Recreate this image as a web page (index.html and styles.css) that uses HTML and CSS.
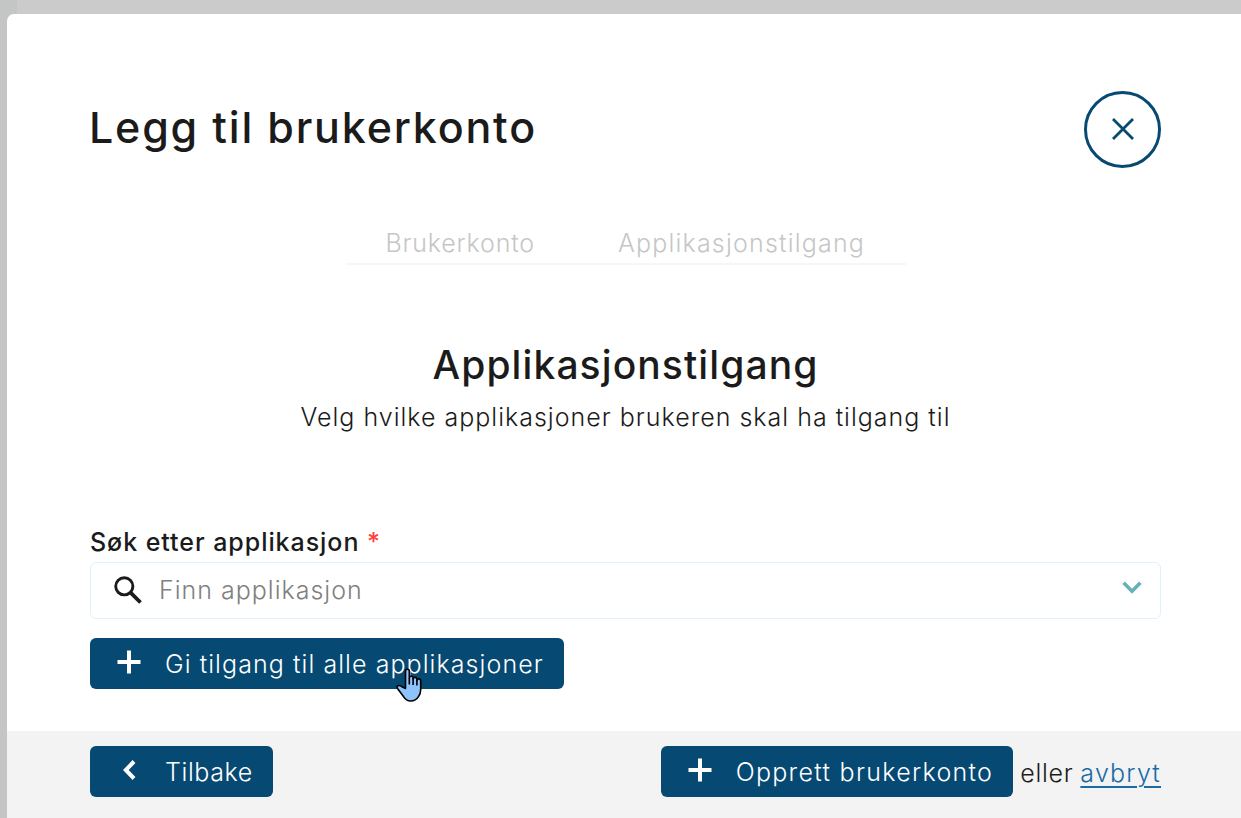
FILE: index.html
```html
<!DOCTYPE html>
<html lang="no">
<head>
    <meta charset="UTF-8">
    <meta name="viewport" content="width=device-width, initial-scale=1.0">
    <title>Legg til brukerkonto</title>
    <link rel="stylesheet" href="styles.css">
</head>
<body>
    <div class="modal">
        <div class="modal-body">
            <header class="modal-header">
                <h1>Legg til brukerkonto</h1>
                <button type="button" class="close" aria-label="Lukk">
                    <svg width="22" height="22" viewBox="0 0 22 22" fill="none" stroke="currentColor" stroke-width="2.8"><path d="M1 1l20 20M21 1L1 21"/></svg>
                </button>
            </header>

            <nav class="steps">
                <span class="step-account">Brukerkonto</span>
                <span class="step-access">Applikasjonstilgang</span>
            </nav>

            <section class="intro">
                <h2>Applikasjonstilgang</h2>
                <p>Velg hvilke applikasjoner brukeren skal ha tilgang til</p>
            </section>

            <form>
                <label for="app">Søk etter applikasjon <span class="required">*</span></label>
                <div class="select">
                    <svg class="icon-search" width="28" height="28" viewBox="0 0 28 28" fill="none" stroke="currentColor"><circle cx="10.3" cy="10.3" r="8.6" stroke-width="2.9"/><path d="M16.6 16.6l9.9 9.9" stroke-width="3.8"/></svg>
                    <input type="text" id="app" placeholder="Finn applikasjon">
                    <svg class="icon-down" width="20" height="13" viewBox="0 0 20 13" fill="none" stroke="currentColor" stroke-width="3.6"><path d="M1.6 1.8L10 10.2l8.4-8.4"/></svg>
                </div>
                <button type="button" class="btn btn-all">
                    <svg width="24" height="24" viewBox="0 0 24 24" fill="none" stroke="currentColor" stroke-width="4"><path d="M12 .5v23M.5 12h23"/></svg>
                    <span>Gi tilgang til alle applikasjoner</span>
                    <svg class="cursor" width="28" height="36" viewBox="0 0 28 36" fill="#8fc3fb" stroke="#000" stroke-width="1.6" stroke-linejoin="round"><path d="M9.5 20.5V3.3q0-2 1.9-2t1.9 2V10q0-1.7 1.9-1.7T17.1 10v1q.2-1.6 1.9-1.6t1.9 1.7v1.2q.3-1.4 1.8-1.4 2 0 2 2.2v8.3q0 4-2.2 7.2-2.8 4.4-7.8 4.4-4.5 0-7.2-4.4L1.3 20.2q-.8-1.8.8-2.5 1.9-.8 3.8 1.1z"/><path d="M13.3 10v6.6M17.1 10.5v6.4M20.9 12v5.4" fill="none"/></svg>
                </button>
            </form>
        </div>

        <footer class="modal-footer">
            <button type="button" class="btn btn-back">
                <svg width="24" height="24" viewBox="0 0 24 24" fill="none" stroke="currentColor" stroke-width="4"><path d="M17 3.5L8.8 12l8.2 8.5"/></svg>
                <span>Tilbake</span>
            </button>
            <div class="actions">
                <button type="button" class="btn btn-create">
                    <svg width="24" height="24" viewBox="0 0 24 24" fill="none" stroke="currentColor" stroke-width="4"><path d="M12 .5v23M.5 12h23"/></svg>
                    <span>Opprett brukerkonto</span>
                </button>
                <span class="or">eller</span>
                <a href="#">avbryt</a>
            </div>
        </footer>
    </div>
</body>
</html>
```
FILE: styles.css
```css
* {
    box-sizing: border-box;
}
body {
    margin: 0;
    height: 818px;
    padding: 14px 0 0 7px;
    overflow: hidden;
    background: linear-gradient(to right, #c4c6c5 17px, #cbcbcb 17px);
    font-family: Inter, "Open Sans", sans-serif;
    font-size: 25px;
    font-weight: 300;
    line-height: 36px;
    letter-spacing: 1px;
    color: #1b1b1b;
}
h1, h2, p {
    margin: 0;
}
h1, h2 {
    font-weight: 500;
}
svg {
    display: block;
    flex: none;
}
.modal {
    display: flex;
    flex-direction: column;
    height: 804px;
    background: #fff;
    border-radius: 7px 0 0 0;
    overflow: hidden;
}
.modal-body {
    height: 717px;
    padding: 76px 80px 0 83px;
}
.modal-header {
    display: flex;
    justify-content: space-between;
    align-items: center;
    height: 78px;
}
h1 {
    margin: -4px 0 0 -1px;
    font-size: 43px;
    line-height: 60px;
    letter-spacing: 1.8px;
}
.close {
    display: flex;
    align-items: center;
    justify-content: center;
    width: 77px;
    height: 77px;
    padding: 0;
    border: 3px solid #064973;
    border-radius: 50%;
    background: #fff;
    color: #064973;
}
.steps {
    display: flex;
    gap: 83px;
    width: 560px;
    height: 40px;
    margin: 57px auto 0;
    padding-left: 40px;
    border-bottom: 2px solid #f6f6f6;
    color: #c6c6c6;
    white-space: nowrap;
}
.step-account {
    letter-spacing: 0.8px;
}
.step-access {
    letter-spacing: 1.2px;
}
.intro {
    margin-top: 76px;
    text-align: center;
}
h2 {
    font-size: 39px;
    line-height: 48px;
    letter-spacing: 1.1px;
}
.intro p {
    margin-top: 10px;
}
label {
    display: block;
    margin-top: 89px;
    font-weight: 500;
    letter-spacing: 0.95px;
}
.required {
    color: #ff4141;
}
.select {
    display: flex;
    align-items: center;
    height: 57px;
    margin-top: 2px;
    padding: 0 18px 0 23px;
    border: 1.5px solid #dff1fb;
    border-radius: 6px;
}
.select input {
    flex: 1;
    min-width: 0;
    margin-left: 17px;
    padding: 0 0 2px;
    border: 0;
    outline: 0;
    background: none;
    font: inherit;
    letter-spacing: inherit;
}
.select input::placeholder {
    color: #808080;
    opacity: 1;
}
.icon-search {
    margin-bottom: 1px;
}
.icon-down {
    margin-bottom: 6px;
    color: #66b2b8;
}
.btn {
    display: flex;
    align-items: center;
    height: 51px;
    padding: 0 20px 0 27px;
    border: 0;
    border-radius: 6px;
    background: #064973;
    color: #fff;
    font: inherit;
    letter-spacing: inherit;
    white-space: nowrap;
}
.btn svg {
    margin: 0 24px 4px 0;
}
.btn-all {
    position: relative;
    margin-top: 19px;
    letter-spacing: 1.07px;
}
.btn .cursor {
    position: absolute;
    left: 306px;
    top: 30px;
    margin: 0;
}
.btn-back {
    letter-spacing: 0.6px;
}
.btn-create {
    letter-spacing: 1.3px;
}
.modal-footer {
    display: flex;
    flex: 1;
    justify-content: space-between;
    align-items: flex-start;
    padding: 15px 80px 0 83px;
    background: #f3f3f3;
}
.actions {
    display: flex;
    align-items: center;
}
.or {
    margin: 3px 7px 0;
    letter-spacing: 0.7px;
}
.actions a {
    margin-top: 3px;
    color: #1a6ba5;
    letter-spacing: 1.2px;
    text-decoration-thickness: 2px;
    text-underline-offset: 4px;
}
```
